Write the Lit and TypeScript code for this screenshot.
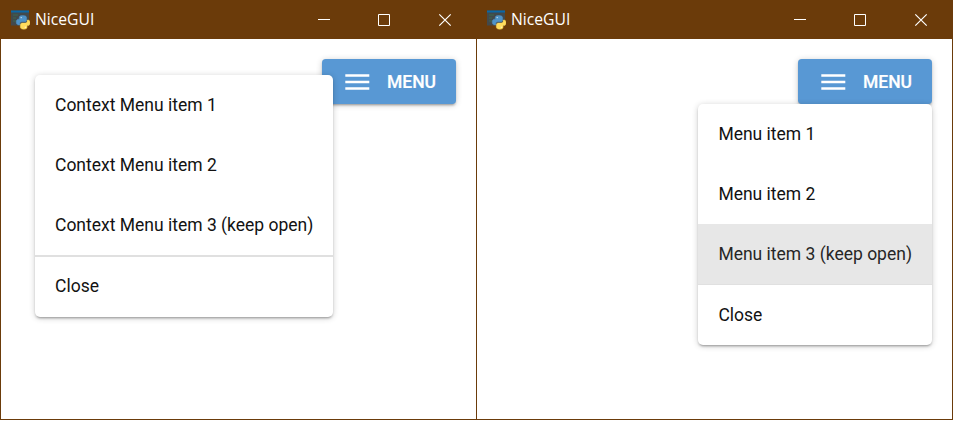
import { LitElement, html, css, svg } from "lit";
import { customElement, property } from "lit/decorators.js";

const logo = svg`
  <rect x="1" y=".5" width="18" height="15" fill="#42494c"/>
  <rect x="1" y=".5" width="18" height="2" fill="#0b68a6"/>
  <path d="M3 5h5M3 8h3M3 11h3" stroke="#3a6b4c" stroke-width="1"/>
  <path d="M12.700 5.500c-2.800 0-3.400.9-3.400 2.200v1.500H8.500c-1.500 0-2.200 1.200-2.200 2.900s.7 2.800 2.200 2.800h1.300v-1.200c0-1.200.8-1.900 2-1.900h3c1 0 1.800-.7 1.800-1.800V7.700c0-1.300-1.200-2.200-3.900-2.200z" fill="#4f93c8" stroke="#4f93c8" stroke-width=".5"/>
  <path d="M13.800 19.300c2.700 0 3.300-.9 3.300-2.200v-1.500h.9c1.400 0 2-1.200 2-2.900s-.6-2.700-2-2.700h-.8v1c0 1.200-.8 2-2 2h-3c-1 0-1.900.8-1.900 1.900v2.200c0 1.300 1.100 2.200 3.500 2.200z" fill="#ffdc5c" stroke="#ffdc5c" stroke-width=".4"/>
  <circle cx="11.200" cy="7.600" r=".7" fill="#dcebf5"/>
  <circle cx="15.300" cy="17.300" r=".7" fill="#fff6cd"/>`;

@customElement("desktop-window")
class DesktopWindow extends LitElement {
  static styles = css`
    :host { display: flex; flex-direction: column; box-sizing: border-box; height: 420px;
      border: solid #6b3b0a; border-width: 0 0 1px 1px; background: #fff; }
    .bar { display: flex; align-items: center; box-sizing: border-box; height: 39px; background: #6b3b0a; color: #fff;
      padding-left: 9px; flex: none; }
    .logo { width: 20px; height: 20px; flex: none; }
    .title { flex: 1; margin: -1px 0 0 5px; font: 15.700px/20px "Open Sans", "Noto Sans", sans-serif; }
    .controls { display: flex; padding-right: 1px; }
    .control { width: 60px; height: 39px; display: block; }
    .wide { width: 61px; }
    .content { position: relative; display: flex; justify-content: flex-end; align-items: flex-start;
      padding: 20px 20px 0 0; flex: 1; }
  `;
  render() {
    return html`
      <header class="bar">
        <svg class="logo" viewBox="0 0 20 20">${logo}</svg>
        <span class="title">NiceGUI</span>
        <div class="controls">
          <svg class="control" viewBox="0 0 60 39" fill="none" stroke="#fff"><path d="M24 19.500h12"/></svg>
          <svg class="control wide" viewBox="0 0 61 39" fill="none" stroke="#fff"><path d="M24.500 14.500h11v11h-11z"/></svg>
          <svg class="control" viewBox="0 0 60 39" fill="none" stroke="#fff" stroke-width="1.200"><path d="M24.300 14.300l11.400 11.400M35.700 14.300L24.300 25.700"/></svg>
        </div>
      </header>
      <main class="content"><slot></slot></main>`;
  }
}

@customElement("menu-button")
class MenuButton extends LitElement {
  static styles = css`
    :host { display: flex; align-items: center; box-sizing: border-box; width: 134px; height: 45px;
      padding-left: 20px; border-radius: 3.750px; background: #5898d4; color: #fff;
      font: 500 17.500px/30px Roboto, sans-serif; -webkit-text-stroke: .2px #fff;
      box-shadow: 0 1px 6px rgba(0,0,0,.2), 0 2px 2px rgba(0,0,0,.14), 0 3px 1px -2px rgba(0,0,0,.12); }
    .icon { width: 30px; height: 30px; margin-right: 15px; }
  `;
  render() {
    return html`<svg class="icon" viewBox="0 0 30 30" fill="#fff"><path d="M3.300 7.300h24v2.500h-24zM3.300 13.800h24v2.400h-24zM3.300 20.200h24v2.500h-24z"/></svg><span>MENU</span>`;
  }
}

@customElement("popup-menu")
class PopupMenu extends LitElement {
  @property({ attribute: false }) items: string[] = [];
  @property({ type: Number }) active = -1;
  static styles = css`
    :host { display: block; position: absolute; overflow: hidden; border-radius: 5px; background: #fff;
      color: #121212; font: 17.500px/30px Roboto, sans-serif;
      box-shadow: 0 1px 6px rgba(0,0,0,.2), 0 2px 2px rgba(0,0,0,.14), 0 3px 1px -2px rgba(0,0,0,.12); }
    :host(.context) { left: 34px; top: 36px; width: 298px; }
    :host(.dropdown) { right: 20px; top: 65px; width: 234px; }
    .item { display: flex; align-items: center; box-sizing: border-box; height: 60px; padding-left: 20px; white-space: nowrap; }
    :host(.dropdown) .item { padding-left: 20.400px; }
    :host(.context) .line + .item { padding-bottom: 2px; }
    .active { background: #e7e7e7; color: #262626; }
    .line { height: 2px; background: #e0e0e0; }
    :host(.dropdown) .line { height: 1px; }
  `;
  render() {
    return html`
      ${this.items.map((t, i) => html`<div class="item ${i === this.active ? "active" : ""}">${t}</div>`)}
      <div class="line"></div>
      <div class="item">Close</div>`;
  }
}

@customElement("app-root")
class AppRoot extends LitElement {
  static styles = css`
    :host { display: flex; height: 422px; overflow: hidden; background: #fff; }
    .first { width: 476px; }
    .second { width: 477px; border-right-width: 1px; }
  `;
  render() {
    return html`
      <desktop-window class="first">
        <menu-button></menu-button>
        <popup-menu class="context" .items=${["Context Menu item 1", "Context Menu item 2", "Context Menu item 3 (keep open)"]}></popup-menu>
      </desktop-window>
      <desktop-window class="second">
        <menu-button></menu-button>
        <popup-menu class="dropdown" .active=${2} .items=${["Menu item 1", "Menu item 2", "Menu item 3 (keep open)"]}></popup-menu>
      </desktop-window>`;
  }
}
